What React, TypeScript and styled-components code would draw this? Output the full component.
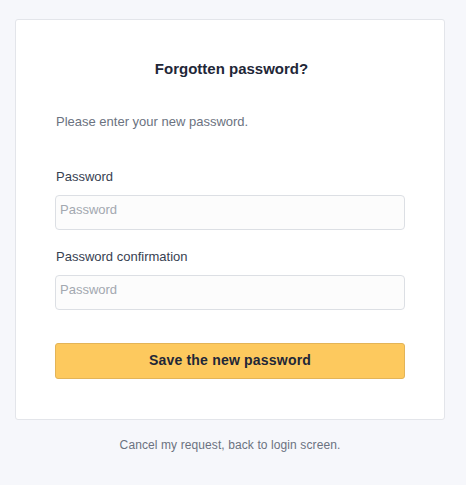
import React from 'react';
import styled, { createGlobalStyle } from 'styled-components';

const GlobalStyle = createGlobalStyle`
  html, body {
    margin: 0;
    padding: 0;
    background: #f6f7fb;
    font-family: "Liberation Sans", Arial, sans-serif;
  }
`;

const Page = styled.div`
  padding: 19px 21px 0 15px;
  box-sizing: border-box;
  width: 466px;
`;

const Card = styled.form`
  background: #ffffff;
  border: 1px solid #e3e5ea;
  border-radius: 3px;
  padding: 39px 39px 40px;
  display: flex;
  flex-direction: column;
`;

const Title = styled.h1`
  margin: 0;
  font-size: 15px;
  line-height: 20px;
  font-weight: 700;
  text-align: center;
  color: #1f2738;
  padding-left: 3px;
`;

const Intro = styled.p`
  margin: 33px 0 35px;
  font-size: 13px;
  line-height: 20px;
  color: #6b7280;
  padding-left: 1px;
`;

const Field = styled.div<{ last?: boolean }>`
  display: flex;
  flex-direction: column;
  gap: 8px;
  margin-bottom: ${({ last }) => (last ? '33px' : '17px')};
`;

const Label = styled.label`
  font-size: 13px;
  line-height: 20px;
  color: #374151;
  padding-left: 1px;
`;

const Input = styled.input`
  box-sizing: border-box;
  height: 35px;
  width: 100%;
  padding: 0 4px 6px;
  border: 1px solid #dcdfe4;
  border-radius: 4px;
  background: #fcfcfc;
  font-family: inherit;
  font-size: 13px;
  color: #374151;
  outline: none;

  &::placeholder {
    color: #a3a8b0;
  }
`;

const SaveButton = styled.button`
  box-sizing: border-box;
  height: 36px;
  width: 100%;
  padding: 0 0 2px;
  border: 1px solid #e3b458;
  border-radius: 3px;
  background: #fdc95e;
  font-family: inherit;
  font-size: 14px;
  font-weight: 700;
  letter-spacing: 0.2px;
  color: #1f2738;
  cursor: pointer;
`;

const BackLink = styled.a`
  display: block;
  margin-top: 17px;
  text-align: center;
  font-size: 12px;
  line-height: 16px;
  letter-spacing: 0.1px;
  color: #6b7280;
  text-decoration: none;
`;

export default function App() {
  return (
    <>
      <GlobalStyle />
      <Page>
        <Card onSubmit={(e) => e.preventDefault()}>
          <Title>Forgotten password?</Title>
          <Intro>Please enter your new password.</Intro>
          <Field>
            <Label htmlFor="password">Password</Label>
            <Input id="password" type="password" placeholder="Password" />
          </Field>
          <Field last>
            <Label htmlFor="confirmation">Password confirmation</Label>
            <Input id="confirmation" type="password" placeholder="Password" />
          </Field>
          <SaveButton type="submit">Save the new password</SaveButton>
        </Card>
        <BackLink href="#">Cancel my request, back to login screen.</BackLink>
      </Page>
    </>
  );
}
